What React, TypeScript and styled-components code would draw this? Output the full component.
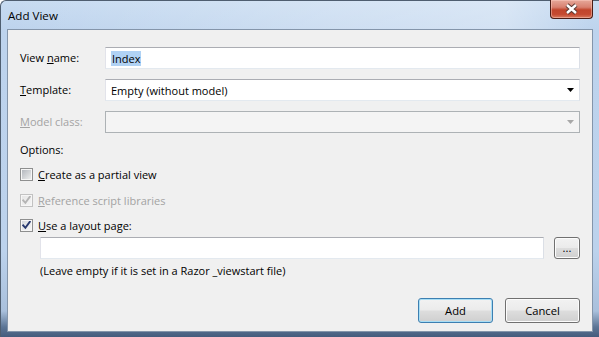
import styled, { createGlobalStyle } from "styled-components";

const GlobalStyle = createGlobalStyle`
  html, body {
    margin: 0;
    padding: 0;
    background: #ffffff;
  }
  body {
    font-family: "Open Sans", "Liberation Sans", sans-serif;
    font-size: 11px;
    color: #000;
  }
`;

const CheckMark = ({ color }: { color: string }) => (
    <svg width="9" height="9" viewBox="0 0 9 9">
        <path d="M1.2 4.4 L3.4 6.8 L7.8 0.8" fill="none" stroke={color} strokeWidth="1.9" strokeLinecap="square"/>
    </svg>
);

const DropArrow = ({ color }: { color: string }) => (
    <svg width="7" height="4" viewBox="0 0 7 4">
        <path d="M0 0 H7 L3.5 4 Z" fill={color}/>
    </svg>
);

const CloseGlyph = () => (
    <svg width="15" height="12" viewBox="0 0 15 12">
        <path d="M3 2 L12 10 M12 2 L3 10" stroke="#5a3a34" strokeWidth="4.4"/>
        <path d="M3 2 L12 10 M12 2 L3 10" stroke="#ffffff" strokeWidth="2.4"/>
    </svg>
);

const Checkbox = ({ checked, disabled }: { checked?: boolean; disabled?: boolean }) => (
    <StyledBox $disabled={disabled}>
        <StyledBoxInner $checked={checked} $disabled={disabled}>
            {checked && <CheckMark color={disabled ? "#b4b4b4" : "#26386e"}/>}
        </StyledBoxInner>
    </StyledBox>
);

export default function App() {
    return (
        <>
            <GlobalStyle/>
            <StyledWindow>
                <StyledTitleBar>
                    <StyledTitle>Add View</StyledTitle>
                    <StyledClose><CloseGlyph/></StyledClose>
                </StyledTitleBar>
                <StyledClient>
                    <StyledFieldRow>
                        <StyledLabel>View <u>n</u>ame:</StyledLabel>
                        <StyledInput>
                            <StyledSelection>Index</StyledSelection>
                        </StyledInput>
                    </StyledFieldRow>
                    <StyledFieldRow $gap={10}>
                        <StyledLabel><u>T</u>emplate:</StyledLabel>
                        <StyledCombo>
                            <span>Empty (without model)</span>
                            <DropArrow color="#000"/>
                        </StyledCombo>
                    </StyledFieldRow>
                    <StyledFieldRow $gap={10}>
                        <StyledLabel $disabled><u>M</u>odel class:</StyledLabel>
                        <StyledCombo $disabled>
                            <span/>
                            <DropArrow color="#a8a8a8"/>
                        </StyledCombo>
                    </StyledFieldRow>
                    <StyledOptions>Options:</StyledOptions>
                    <StyledCheckRow $gap={8}>
                        <Checkbox/>
                        <span><u>C</u>reate as a partial view</span>
                    </StyledCheckRow>
                    <StyledCheckRow $gap={10} $disabled>
                        <Checkbox checked disabled/>
                        <span><u>R</u>eference script libraries</span>
                    </StyledCheckRow>
                    <StyledCheckRow $gap={9}>
                        <Checkbox checked/>
                        <span><u>U</u>se a layout page:</span>
                    </StyledCheckRow>
                    <StyledLayoutRow>
                        <StyledInput/>
                        <StyledButton $width={26} $height={22}>...</StyledButton>
                    </StyledLayoutRow>
                    <StyledHint>(Leave empty if it is set in a Razor _viewstart file)</StyledHint>
                    <StyledFooter>
                        <StyledButton $width={75} $height={25} $default>Add</StyledButton>
                        <StyledButton $width={75} $height={25}>Cancel</StyledButton>
                    </StyledFooter>
                </StyledClient>
            </StyledWindow>
        </>
    );
}

const StyledWindow = styled.div`
    width: 599px;
    height: 337px;
    box-sizing: border-box;
    display: flex;
    flex-direction: column;
    padding: 0 6px 5px 6px;
    border-top: 1px solid #4f5e70;
    border-left: 1px solid #4f5e70;
    border-top-left-radius: 6px;
    background: linear-gradient(180deg, #c7dbf1 0px, #bdd3ed 30px, #bcd2ec 250px, #a9c0dc 310px, #5c7595 326px, #42597a 337px);
`;

const StyledTitleBar = styled.div`
    height: 28px;
    display: flex;
    justify-content: space-between;
    align-items: flex-start;
    background: linear-gradient(90deg, rgba(255, 255, 255, 0) 0%, rgba(255, 255, 255, 0.25) 55%, rgba(255, 255, 255, 0.35) 85%, rgba(255, 255, 255, 0) 100%);
`;

const StyledTitle = styled.div`
    padding: 7px 0 0 1px;
    line-height: 16px;
    font-size: 11.6px;
    color: #000;
`;

const StyledClose = styled.div`
    width: 43px;
    height: 19px;
    margin-top: -1px;
    box-sizing: border-box;
    border: 1px solid #4b1c15;
    border-top: none;
    border-radius: 0 0 4px 4px;
    display: flex;
    align-items: center;
    justify-content: center;
    background: linear-gradient(180deg, #e6a89a 0%, #d88170 40%, #c1452c 55%, #c54a31 80%, #d97a5e 100%);
    box-shadow: inset 0 0 0 1px rgba(255, 210, 200, 0.45);
`;

const StyledClient = styled.div`
    flex: 1;
    display: flex;
    flex-direction: column;
    border: 1px solid #8495aa;
    background: #f0f0f0;
    padding: 17px 12px 8px 12px;
`;

const StyledFieldRow = styled.div<{ $gap?: number }>`
    display: grid;
    grid-template-columns: 85px 1fr;
    align-items: center;
    height: 22px;
    margin-top: ${p => p.$gap ?? 0}px;
`;

const StyledLabel = styled.label<{ $disabled?: boolean }>`
    color: ${p => (p.$disabled ? "#a3a3a3" : "#000")};
    line-height: 16px;
`;

const StyledInput = styled.div`
    flex: 1;
    height: 22px;
    box-sizing: border-box;
    display: flex;
    align-items: center;
    padding-left: 5px;
    background: #fff;
    border: 1px solid;
    border-color: #abadb3 #dbdfe6 #e3e9ef #e2e3ea;
`;

const StyledSelection = styled.span`
    background: #b0d2f4;
    line-height: 15px;
    padding: 0 1px;
`;

const StyledCombo = styled.div<{ $disabled?: boolean }>`
    height: 22px;
    box-sizing: border-box;
    display: flex;
    align-items: center;
    justify-content: space-between;
    padding: 0 5px 0 5px;
    background: ${p => (p.$disabled ? "#f4f4f4" : "#fff")};
    border: 1px solid;
    border-color: ${p => (p.$disabled ? "#adb2b5" : "#abadb3 #dbdfe6 #e3e9ef #e2e3ea")};
`;

const StyledOptions = styled.div`
    margin-top: 9px;
    line-height: 16px;
`;

const StyledCheckRow = styled.div<{ $gap: number; $disabled?: boolean }>`
    display: flex;
    align-items: center;
    gap: 5px;
    height: 16px;
    margin-top: ${p => p.$gap}px;
    color: ${p => (p.$disabled ? "#a3a3a3" : "#000")};
`;

const StyledBox = styled.span<{ $disabled?: boolean }>`
    width: 13px;
    height: 13px;
    box-sizing: border-box;
    padding: 1px;
    border: 1px solid ${p => (p.$disabled ? "#c2c2c2" : "#8e8f8f")};
    background: #f6f6f6;
    display: flex;
`;

const StyledBoxInner = styled.span<{ $checked?: boolean; $disabled?: boolean }>`
    flex: 1;
    display: flex;
    align-items: center;
    justify-content: center;
    background: ${p =>
        p.$disabled
            ? "linear-gradient(135deg, #e6e6e6, #f4f4f4)"
            : p.$checked
                ? "linear-gradient(135deg, #d4d8dd, #f6f6f6)"
                : "linear-gradient(135deg, #b4b8be, #eceded)"};
`;

const StyledLayoutRow = styled.div`
    display: flex;
    gap: 10px;
    margin-top: 4px;
    padding-left: 20px;
`;

const StyledHint = styled.div`
    margin-top: 4px;
    padding-left: 20px;
    line-height: 16px;
`;

const StyledFooter = styled.div`
    margin-top: auto;
    display: flex;
    justify-content: flex-end;
    gap: 12px;
`;

const StyledButton = styled.button<{ $width: number; $height: number; $default?: boolean }>`
    width: ${p => p.$width}px;
    height: ${p => p.$height}px;
    box-sizing: border-box;
    padding: 0;
    font-family: inherit;
    font-size: 11.2px;
    color: #000;
    border-radius: 3px;
    border: 1px solid ${p => (p.$default ? "#3c7fb1" : "#707070")};
    background: linear-gradient(180deg, #f2f2f2 0%, #ebebeb 48%, #dddddd 52%, #cfcfcf 100%);
    box-shadow: inset 0 0 0 1px ${p => (p.$default ? "#a9def5" : "#fcfcfc")};
    line-height: 1;
`;
